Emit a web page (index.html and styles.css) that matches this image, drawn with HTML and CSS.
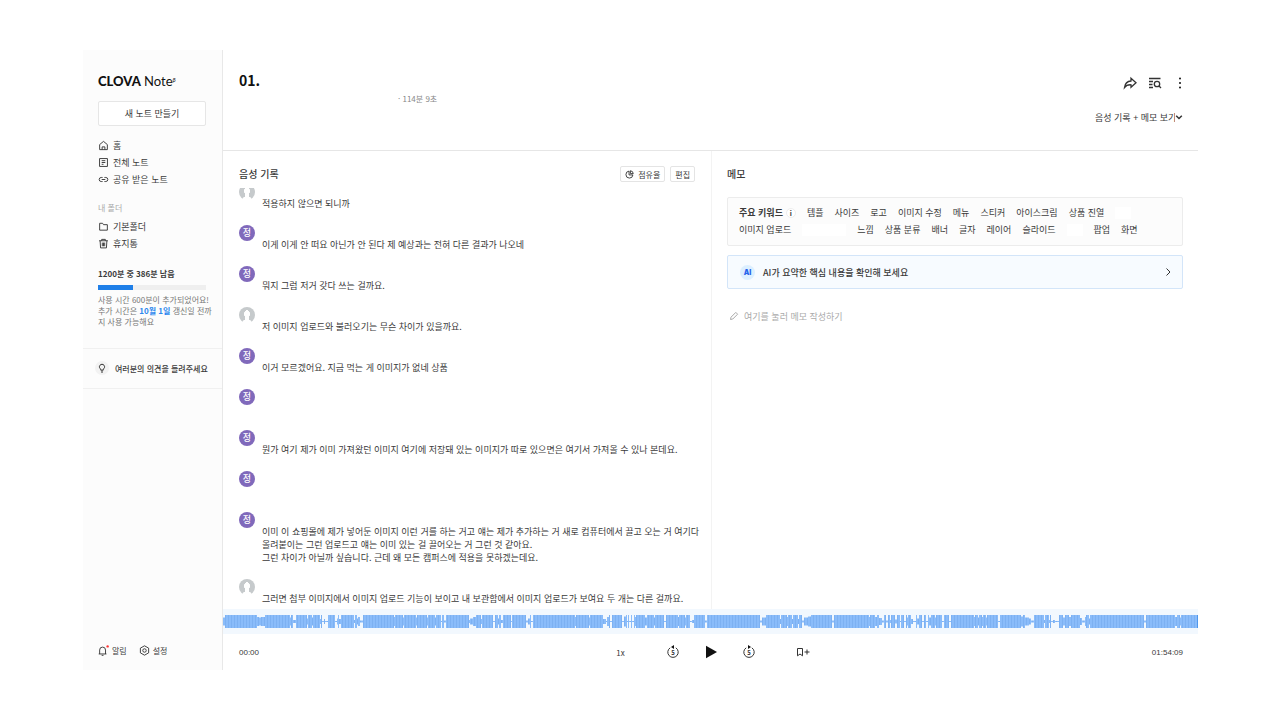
FILE: index.html
```html
<!DOCTYPE html>
<html lang="ko">
<head>
    <meta charset="UTF-8">
    <meta name="viewport" content="width=device-width, initial-scale=1.0">
    <title>CLOVA Note</title>
    <link rel="stylesheet" href="styles.css">
</head>
<body>
    <div class="app">
        <aside class="sidebar">
            <div class="sidebar-top">
                <a class="logo" href="#"><b>CLOVA</b> <span>Note</span><sup>β</sup></a>
                <button class="new-note">새 노트 만들기</button>

                <nav class="nav">
                    <a href="#">
                        <svg class="icon" viewBox="0 0 12 12"><path d="M1.8 5 6 1.5 10.200 5v5.500H1.800zM4.500 10.500V7.500h3v3"/></svg>
                        홈
                    </a>
                    <a href="#">
                        <svg class="icon" viewBox="0 0 12 12"><path d="M1.700 1.700h8.600v8.600H1.700zM4 4h4M4 6h4M4 8h2"/></svg>
                        전체 노트
                    </a>
                    <a href="#">
                        <svg class="icon" viewBox="0 0 12 12"><path d="M5 3.800H3.500a2.200 2.200 0 0 0 0 4.400H5M7 3.800h1.500a2.200 2.200 0 0 1 0 4.400H7M4 6h4"/></svg>
                        공유 받은 노트
                    </a>
                </nav>

                <div class="nav-label">내 폴더</div>
                <nav class="nav folders">
                    <a href="#">
                        <svg class="icon" viewBox="0 0 12 12"><path d="M1.800 2.500h3.200l1 1.500h4.200v6H1.800z"/></svg>
                        기본폴더
                    </a>
                    <a href="#">
                        <svg class="icon" viewBox="0 0 12 12"><path d="M1.200 3h9.600M4 3V1.500h4V3M2.300 3l.5 7.800h6.400L9.700 3M4.700 5v4M6 5v4M7.300 5v4"/></svg>
                        휴지통
                    </a>
                </nav>

                <div class="usage">
                    <strong>1200분 중 386분 남음</strong>
                    <div class="usage-bar"><div class="usage-fill" style="width: 32%"></div></div>
                    <p>사용 시간 600분이 추가되었어요!<br>추가 시간은 <b>10월 1일</b> 갱신일 전까<br>지 사용 가능해요</p>
                </div>
            </div>

            <a class="feedback" href="#">
                <span class="feedback-icon">
                    <svg viewBox="0 0 10 10"><path d="M3.800 6.200a2.600 2.600 0 1 1 2.400 0v1H3.800zM4 9h2"/></svg>
                </span>
                여러분의 의견을 들려주세요
            </a>

            <div class="sidebar-bottom">
                <button>
                    <svg class="icon" viewBox="0 0 12 12"><path d="M.8 9.800h8.400M1.800 9.800V5.500a3.200 3.200 0 0 1 6.400 0v4.300M4 11.300h2"/><circle class="dot" cx="10.500" cy="1.500" r="1.300"/></svg>
                    알림
                </button>
                <button>
                    <svg class="icon" viewBox="0 0 12 12"><path d="M6 .9 10.500 3.400v5.200L6 11.100 1.500 8.600V3.400z"/><circle cx="6" cy="6" r="1.900"/></svg>
                    설정
                </button>
            </div>
        </aside>

        <main class="main">
            <header class="header">
                <div class="header-info">
                    <h1>01.</h1>
                    <p class="duration">· 114분 9초</p>
                </div>
                <div class="header-side">
                    <div class="header-tools">
                        <button aria-label="공유">
                            <svg viewBox="0 0 14 14"><path d="M8 2.300 13 6.800 8 11.200V8.800C5 8.600 3 9.500 1.500 11.500 2 7.500 4.500 5.200 8 5z"/></svg>
                        </button>
                        <button aria-label="검색">
                            <svg viewBox="0 0 14 14"><path d="M1 2.500h11.500M1 5.500h4M1 8.500h3.500M1 11.500h4"/><circle cx="9" cy="8" r="2.700"/><path d="m11 10 2 2"/></svg>
                        </button>
                        <button aria-label="더보기">
                            <svg viewBox="0 0 14 14"><g class="solid"><circle cx="7" cy="2.500" r="1"/><circle cx="7" cy="7" r="1"/><circle cx="7" cy="11.500" r="1"/></g></svg>
                        </button>
                    </div>
                    <label class="view-mode">
                        <select aria-label="보기 방식">
                            <option>음성 기록 + 메모 보기</option>
                        </select>
                        <svg viewBox="0 0 8 8"><path d="m1.200 2.800 2.800 2.700 2.800-2.700"/></svg>
                    </label>
                </div>
            </header>

            <div class="columns">
                <section class="record">
                    <div class="record-head">
                        <h2>음성 기록</h2>
                        <button>
                            <svg viewBox="0 0 10 10"><path d="M4.500 1.200A3.900 3.900 0 1 0 8.800 5.500H4.500z"/><path d="M6 .8A3.600 3.600 0 0 1 9.200 4H6z"/></svg>
                            점유율
                        </button>
                        <button>편집</button>
                    </div>
                    <div class="record-scroll">
                        <ul class="talk">
                            <li><span class="avatar guest"></span><p>적용하지 않으면 되니까</p></li>
                            <li><span class="avatar">정</span><p>이게 이게 안 떠요 아닌가 안 된다 제 예상과는 전혀 다른 결과가 나오네</p></li>
                            <li><span class="avatar">정</span><p>뭐지 그럼 저거 갖다 쓰는 걸까요.</p></li>
                            <li><span class="avatar guest"></span><p>저 이미지 업로드와 불러오기는 무슨 차이가 있을까요.</p></li>
                            <li><span class="avatar">정</span><p>이거 모르겠어요. 지금 먹는 게 이미지가 없네 상품</p></li>
                            <li><span class="avatar">정</span><p></p></li>
                            <li><span class="avatar">정</span><p>뭔가 여기 제가 이미 가져왔던 이미지 여기에 저장돼 있는 이미지가 따로 있으면은 여기서 가져올 수 있나 본데요.</p></li>
                            <li><span class="avatar">정</span><p></p></li>
                            <li><span class="avatar">정</span><p>이미 이 쇼핑몰에 제가 넣어둔 이미지 이런 거를 하는 거고 얘는 제가 추가하는 거 새로 컴퓨터에서 끌고 오는 거 여기다<br>올려붙이는 그런 업로드고 얘는 이미 있는 걸 끌어오는 거 그런 것 같아요.<br>그런 차이가 아닐까 싶습니다. 근데 왜 모든 캠퍼스에 적용을 못하겠는데요.</p></li>
                            <li><span class="avatar guest"></span><p>그러면 첨부 이미지에서 이미지 업로드 기능이 보이고 내 보관함에서 이미지 업로드가 보여요 두 개는 다른 걸까요.</p></li>
                        </ul>
                    </div>
                </section>

                <section class="memo">
                    <h2>메모</h2>
                    <div class="keywords">
                        <div class="keyword-row">
                            <strong>주요 키워드</strong><button class="info" aria-label="도움말">i</button>
                            <span>템플</span><span>사이즈</span><span>로고</span><span>이미지 수정</span><span>메뉴</span><span>스티커</span><span>아이스크림</span><span>상품 진열</span><span class="blank short"></span>
                        </div>
                        <div class="keyword-row">
                            <span>이미지 업로드</span><span class="blank long"></span><span>느낌</span><span>상품 분류</span><span>배너</span><span>글자</span><span>레이어</span><span>슬라이드</span><span class="blank short"></span><span>팝업</span><span>화면</span>
                        </div>
                    </div>
                    <button class="ai-card">
                        <span class="ai-badge">AI</span>
                        AI가 요약한 핵심 내용을 확인해 보세요
                        <svg viewBox="0 0 10 10"><path d="m3.500 1.500 3.500 3.500-3.500 3.500"/></svg>
                    </button>
                    <label class="memo-input">
                        <svg viewBox="0 0 10 10"><path d="m1.500 8.500.5-2.300 4.800-4.800 1.800 1.800L3.800 8z"/></svg>
                        <input type="text" aria-label="메모" placeholder="여기를 눌러 메모 작성하기">
                    </label>
                </section>
            </div>

            <footer class="player">
                <svg class="wave" id="wave" viewBox="0 0 975 13" preserveAspectRatio="none"></svg>
                <div class="controls">
                    <span class="time">00:00</span>
                    <div class="buttons">
                        <button class="speed">1x</button>
                        <button aria-label="5초 뒤로">
                            <svg viewBox="0 0 14 14"><path d="M4.200 2.800a5.200 5.200 0 1 0 5.600 0"/><path class="solid" d="M8 0v4L5 2z"/><text x="7" y="9.500">5</text></svg>
                        </button>
                        <button aria-label="재생">
                            <svg viewBox="0 0 14 14"><path class="solid" d="M2 .8v12.400l11-6.200z"/></svg>
                        </button>
                        <button aria-label="5초 앞으로">
                            <svg viewBox="0 0 14 14"><path d="M4.200 2.800a5.200 5.200 0 1 0 5.600 0"/><path class="solid" d="M6 0v4l3-2z"/><text x="7" y="9.500">5</text></svg>
                        </button>
                        <button class="bookmark" aria-label="북마크 추가">
                            <svg viewBox="0 0 14 14"><path d="M1.500 3.500h5v7.300L4 9l-2.500 1.800zM8.500 7h5M11 4.500v5"/></svg>
                        </button>
                    </div>
                    <span class="time">01:54:09</span>
                </div>
            </footer>
        </main>
    </div>

    <script src="wave.js"></script>
</body>
</html>
```

FILE: styles.css
```css
* {
    box-sizing: border-box;
}
body {
    margin: 0;
    padding: 50px 82px 50px 83px;
    background: #fff;
    color: #3a3a3a;
    font-family: "Noto Sans CJK KR", sans-serif;
    font-size: 9px;
}
h1, h2, p, ul {
    margin: 0;
    padding: 0;
}
a {
    color: inherit;
    text-decoration: none;
}
button, input, select {
    margin: 0;
    padding: 0;
    border: 0;
    background: none;
    color: inherit;
    font: inherit;
}
svg {
    display: block;
    flex: none;
    fill: none;
    stroke: #333;
    stroke-width: 1;
}
svg .solid {
    fill: #111;
    stroke: none;
}
.icon {
    width: 11px;
    height: 11px;
}
.app {
    display: flex;
    min-height: calc(100vh - 100px);
}

/* sidebar */
.sidebar {
    display: flex;
    flex-direction: column;
    flex: none;
    width: 140px;
    background: #fcfcfc;
    border-right: 1px solid #e8e8e8;
}
.sidebar-top {
    padding: 23px 16px 21px 15px;
}
.logo {
    display: block;
    height: 16px;
    color: #111;
    font-family: Lato, sans-serif;
    font-size: 13px;
    line-height: 16px;
    white-space: nowrap;
}
.logo b {
    font-weight: 900;
}
.logo sup {
    font-size: 6px;
    font-style: italic;
    line-height: 1;
    vertical-align: 4px;
}
.new-note {
    display: block;
    width: 100%;
    height: 25px;
    margin-top: 12px;
    background: #fff;
    border: 1px solid #e6e6e6;
    border-radius: 2px;
}
.nav {
    margin-top: 11px;
}
.nav a {
    display: flex;
    align-items: center;
    gap: 4px;
    height: 17px;
}
.nav-label {
    margin-top: 13px;
    color: #aaa;
    font-size: 8px;
    line-height: 14px;
}
.folders {
    margin-top: 3px;
}
.usage {
    margin-top: 15px;
    font-size: 8px;
    white-space: nowrap;
}
.usage strong {
    display: block;
    line-height: 14px;
}
.usage-bar {
    height: 5px;
    margin: 4px 0;
    background: #efefef;
}
.usage-fill {
    height: 100%;
    background: #1f7fe8;
}
.usage p {
    color: #777;
    line-height: 11px;
}
.usage p b {
    color: #2b87ee;
}
.feedback {
    display: flex;
    align-items: center;
    gap: 6px;
    height: 41px;
    padding: 0 0 1px 12px;
    border-top: 1px solid #f0f0f0;
    border-bottom: 1px solid #f0f0f0;
    font-size: 8px;
    font-weight: 500;
    white-space: nowrap;
}
.feedback-icon {
    display: flex;
    align-items: center;
    justify-content: center;
    width: 14px;
    height: 14px;
    background: #f2f2f2;
    border-radius: 50%;
}
.feedback-icon svg {
    width: 10px;
    height: 10px;
}
.sidebar-bottom {
    display: flex;
    align-items: center;
    gap: 12px;
    height: 40px;
    margin-top: auto;
    padding-left: 15px;
}
.sidebar-bottom button {
    display: flex;
    align-items: center;
    gap: 3px;
    font-size: 8px;
}
.dot {
    fill: #f33;
    stroke: none;
}

/* header */
.main {
    display: flex;
    flex-direction: column;
    flex: 1;
    min-width: 0;
}
.header {
    display: flex;
    justify-content: space-between;
    height: 101px;
    padding: 20px 15px 0 16px;
    border-bottom: 1px solid #e6e6e6;
}
h1 {
    color: #111;
    font-size: 14px;
    line-height: 20px;
}
.duration {
    margin-top: 2px;
    padding-left: 159px;
    color: #888;
    font-size: 8px;
    line-height: 14px;
}
.header-side {
    display: flex;
    flex-direction: column;
    align-items: flex-end;
    gap: 20px;
    padding-top: 6px;
}
.header-tools {
    display: flex;
    gap: 11px;
    margin-right: -4px;
}
.header-tools svg {
    width: 14px;
    height: 14px;
    stroke-width: 1.3;
}
.view-mode {
    display: flex;
    align-items: center;
    height: 14px;
}
.view-mode select {
    appearance: none;
}
.view-mode svg {
    width: 8px;
    height: 8px;
    stroke-width: 1.5;
}

/* transcript */
.columns {
    display: flex;
    flex: 1;
}
h2 {
    font-size: 10px;
    font-weight: 500;
    line-height: 16px;
}
.record {
    flex: 1;
    min-width: 0;
    padding: 15px 0 0 16px;
    border-right: 1px solid #f3f3f3;
}
.record-head {
    display: flex;
    align-items: center;
    gap: 5px;
    height: 16px;
    margin-right: 16px;
}
.record-head h2 {
    margin-right: auto;
}
.record-head button {
    display: flex;
    align-items: center;
    gap: 4px;
    height: 16px;
    padding: 0 4px;
    background: #fff;
    border: 1px solid #e4e4e4;
    border-radius: 2px;
    font-size: 8px;
}
.record-head svg {
    width: 9px;
    height: 9px;
}
.record-scroll {
    margin-top: 6px;
    overflow: hidden;
}
.talk {
    display: flex;
    flex-direction: column;
    gap: 15px;
    margin-top: -4px;
    list-style: none;
}
.talk li {
    display: flex;
    gap: 7px;
    min-height: 26px;
}
.talk p {
    padding-top: 13px;
    line-height: 13px;
    white-space: nowrap;
}
.avatar {
    flex: none;
    width: 16px;
    height: 16px;
    background: #8069bb;
    border-radius: 50%;
    color: #fff;
    font-weight: 500;
    line-height: 16px;
    text-align: center;
}
.guest {
    background:
        radial-gradient(ellipse 3px 4px at 8px 7px, #fff 90%, transparent),
        radial-gradient(ellipse 5px 4px at 8px 16px, #fff 90%, transparent),
        linear-gradient(#fff, #fff) 6px 9px / 4px 7px no-repeat,
        #c6cacc;
}

/* memo */
.memo {
    flex: 1;
    min-width: 0;
    max-width: 486px;
    padding: 15px 15px 0;
}
.keywords {
    margin-top: 15px;
    padding: 6px 11px 7px;
    background: #fcfcfc;
    border: 1px solid #ececec;
    border-radius: 2px;
}
.keyword-row {
    display: flex;
    align-items: center;
    gap: 11px;
    height: 17px;
    white-space: nowrap;
}
.info {
    width: 10px;
    height: 10px;
    margin-left: -8px;
    background: #fff;
    border: 1px solid #eee;
    border-radius: 50%;
    font-size: 7px;
    font-weight: 700;
    line-height: 8px;
}
.blank {
    height: 12px;
    background: #fff;
}
.short {
    width: 16px;
}
.long {
    width: 44px;
}
.ai-card {
    display: flex;
    align-items: center;
    gap: 8px;
    width: 100%;
    height: 34px;
    margin-top: 9px;
    padding: 0 9px 0 12px;
    background: #f7fbff;
    border: 1px solid #d3e5f9;
    border-radius: 2px;
    font-weight: 500;
}
.ai-badge {
    width: 15px;
    height: 15px;
    background: #dcefff;
    border-radius: 50%;
    color: #2563eb;
    font-family: Inter, sans-serif;
    font-size: 7px;
    font-weight: 900;
    line-height: 15px;
    text-align: center;
}
.ai-card svg {
    width: 10px;
    height: 10px;
    margin-left: auto;
}
.memo-input {
    display: flex;
    align-items: center;
    gap: 5px;
    margin-top: 19px;
    padding-left: 2px;
}
.memo-input svg {
    width: 10px;
    height: 10px;
    stroke: #aaa;
}
.memo-input input {
    flex: 1;
    height: 16px;
    outline: 0;
}
.memo-input input::placeholder {
    color: #aaa;
}

/* player */
.wave {
    width: 100%;
    height: 25px;
    padding: 6px 0;
    background: #f2f8fe;
    stroke: none;
    fill: #8abcfa;
}
.wave .gap {
    fill: #7db1f2;
}
.wave .end {
    fill: #4f97ec;
}
.controls {
    display: flex;
    align-items: center;
    justify-content: space-between;
    height: 36px;
    padding: 0 15px 0 16px;
    font-size: 8px;
}
.time {
    width: 32px;
    font-family: "Liberation Sans", sans-serif;
}
.time:last-child {
    text-align: right;
}
.buttons {
    display: flex;
    align-items: center;
    padding-left: 4px;
}
.buttons button {
    width: 38px;
}
.buttons svg {
    width: 14px;
    height: 14px;
    margin: 0 auto;
}
.buttons text {
    fill: #333;
    stroke: none;
    font-size: 6px;
    font-weight: 700;
    text-anchor: middle;
}
.buttons .speed {
    width: 32px;
    margin-right: 17px;
}
.buttons .bookmark {
    margin-left: 16px;
}
```

FILE: wave.js
```js
// quiet parts of the recording: [start, width, bar height]
const quiet = [
    [0, 2, 8], [34, 2, 9], [36, 2, 8], [38, 4, 9], [67, 1, 8], [70, 3, 3], [84, 1, 6], [89, 1, 8], [97, 1, 5],
    [99, 2, 1], [101, 1, 5], [102, 3, 1], [112, 2, 1], [114, 1, 6], [116, 2, 5],
    [131, 1, 3], [134, 1, 6], [135, 2, 9], [137, 3, 2], [171, 1, 9], [180, 1, 8], [193, 1, 8], [204, 1, 8],
    [212, 1, 8], [218, 1, 1], [221, 2, 2], [246, 1, 3], [247, 3, 6], [250, 3, 9], [258, 1, 5],
    [270, 2, 1], [275, 1, 6], [278, 2, 3], [288, 1, 1], [303, 2, 2], [305, 2, 6], [308, 2, 1],
    [352, 1, 9], [366, 1, 8], [380, 3, 5], [383, 1, 1], [384, 2, 9], [387, 2, 1],
    [399, 2, 1], [401, 2, 10], [404, 1, 1], [406, 2, 1], [409, 2, 1], [412, 1, 9], [422, 2, 8],
    [431, 1, 8], [441, 2, 1], [455, 1, 9], [462, 1, 8], [467, 2, 1], [469, 2, 3], [482, 2, 2],
    [537, 2, 2], [539, 4, 8], [557, 1, 5], [564, 1, 9], [569, 1, 5], [575, 1, 5], [579, 2, 2],
    [581, 4, 8], [585, 3, 10], [609, 2, 2], [646, 1, 9], [652, 2, 9], [656, 3, 7], [659, 2, 2], [663, 2, 2],
    [667, 1, 3], [672, 2, 4], [677, 1, 1], [681, 2, 1], [684, 1, 8], [688, 2, 5], [690, 3, 1],
    [694, 2, 6], [699, 2, 1], [703, 2, 1], [706, 2, 8], [712, 1, 8], [719, 2, 1], [726, 2, 1],
    [751, 1, 9], [755, 1, 8], [759, 1, 9], [763, 1, 8], [775, 2, 1], [798, 2, 10], [802, 4, 8], [805, 3, 6], [808, 3, 2],
    [821, 1, 3], [826, 1, 3], [828, 2, 1], [830, 2, 3], [832, 4, 1], [840, 2, 8], [846, 2, 9], [857, 2, 7],
    [859, 3, 2], [862, 1, 9], [866, 1, 6], [921, 2, 2], [952, 2, 9], [957, 1, 8]
];

const wave = document.getElementById('wave');

function addBar(x, width, height, name) {
    const bar = document.createElementNS('http://www.w3.org/2000/svg', 'rect');
    bar.setAttribute('x', x);
    bar.setAttribute('y', (13 - height) / 2);
    bar.setAttribute('width', width);
    bar.setAttribute('height', height);
    if (name) bar.setAttribute('class', name);
    wave.appendChild(bar);
}

for (let x = 0; x < 974; x++) {
    const part = quiet.find(q => x >= q[0] && x < q[0] + q[1]);
    addBar(x, 1, part ? part[2] : 13, x % 3 === 2 ? 'gap' : '');
}
addBar(974, 1, 13, 'end');
```
